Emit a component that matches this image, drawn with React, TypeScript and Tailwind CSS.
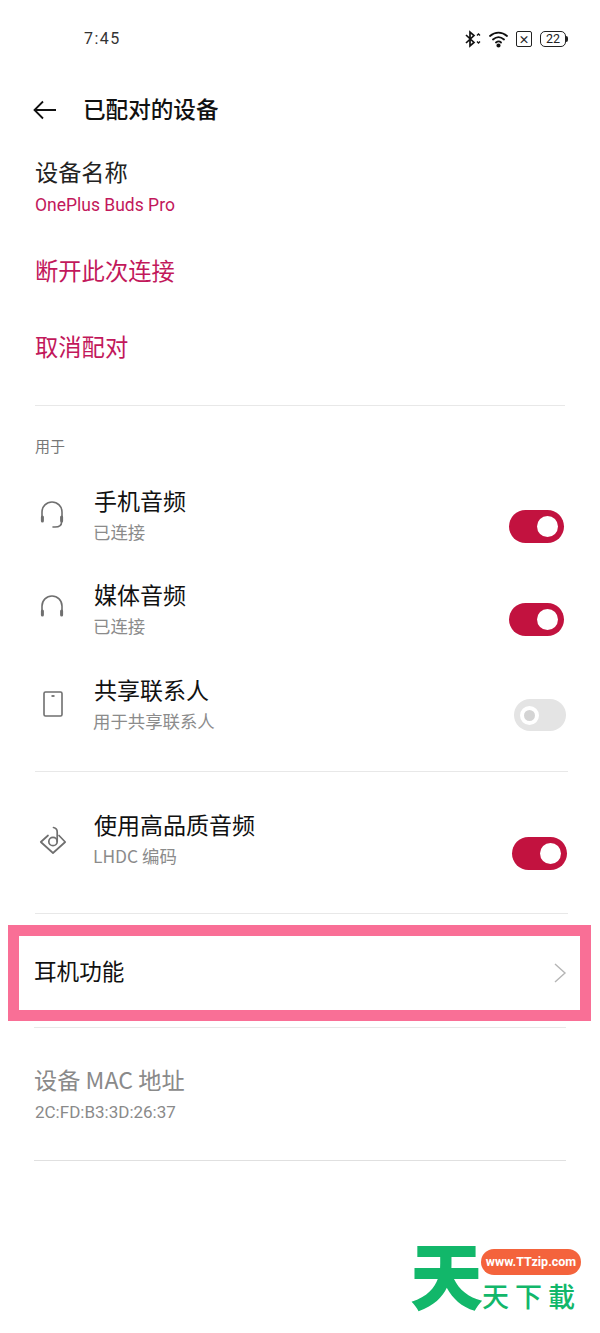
import type { ReactNode } from 'react'

const Toggle = ({ on = true, className = '' }: { on?: boolean; className?: string }) =>
  on ? (
    <div className={`flex h-[33px] w-[55px] items-center justify-end rounded-full bg-[#c2123f] pr-[6px] ${className}`}>
      <div className="h-[21px] w-[21px] rounded-full bg-white" />
    </div>
  ) : (
    <div className={`flex h-[32px] w-[52px] items-center rounded-full bg-[#e4e4e4] pl-[6px] ${className}`}>
      <div className="h-[19px] w-[19px] rounded-full border-[4px] border-white bg-[#d4d4d4]" />
    </div>
  )

const Headset = ({ mic = false }: { mic?: boolean }) => (
  <svg width="26" height="28" viewBox="0 0 26 28" fill="none" stroke="#6f6f6f" strokeWidth="1.600" strokeLinecap="round">
    <path d="M3 19V11a10 10 0 0 1 20 0v8" />
    <path d="M3.400 16v4M22.600 16v4" strokeWidth="3" />
    {mic && <path d="M22.600 21c0 3.600-3 5-6.600 5h-2" />}
  </svg>
)

const Phone = () => (
  <svg width="22" height="28" viewBox="0 0 22 28" fill="none" stroke="#6f6f6f" strokeWidth="1.600" strokeLinejoin="round" className="ml-[3px]">
    <rect x="2" y="2" width="18" height="24" rx="1.500" />
    <path d="M9.500 6h3" strokeWidth="1.800" />
  </svg>
)

const HiRes = () => (
  <svg width="28" height="30" viewBox="0 0 28 30" fill="none" stroke="#6f6f6f" strokeWidth="1.700" strokeLinejoin="round" strokeLinecap="round">
    <path d="M9 10.500 1.800 17 14 28l12.200-11L20 10.500" />
    <circle cx="14" cy="16.500" r="4.200" />
    <path d="M18.200 16.500V7c0-2.500-1.200-4-3.700-4.500" />
  </svg>
)

const Row = ({
  icon,
  title,
  sub,
  children,
  className = '',
}: {
  icon: ReactNode
  title: string
  sub: string
  children: ReactNode
  className?: string
}) => (
  <div className={`flex items-start ${className}`}>
    <div className="flex w-[59px] justify-start pl-[4px] pt-[16px]">{icon}</div>
    <div className="flex-1">
      <p className="text-[23px] leading-[30px] text-[#111]">{title}</p>
      <p className="ml-[-1px] mt-[2px] text-[17.400px] leading-[30px] text-[#8b8b8b]">{sub}</p>
    </div>
    {children}
  </div>
)

const StatusBar = () => (
  <div className="flex h-[78px] items-center justify-between pl-[84px] pr-[32px]">
    <span className="font-['Roboto',sans-serif] text-[16px] tracking-[1.500px] text-[#333]">7:45</span>
    <div className="flex items-center gap-[7px]">
      <svg width="18" height="18" viewBox="0 0 18 18" fill="none" stroke="#111" strokeWidth="1.700">
        <path d="M2 5l8 7.500-4 3.500V2l4 3.500L2 13" />
        <path d="M13 5.500l1.500-1.500L16 5.500M13 11.500l1.500 1.500 1.500-1.500" strokeWidth="1.300" />
      </svg>
      <svg width="20" height="18" viewBox="0 0 20 18" fill="none" stroke="#111" strokeWidth="1.800" strokeLinecap="round">
        <path d="M1 6c5-4.500 12-4.500 17 0M4 9.500c3.500-3 7.500-3 11 0M7 12.500c2-1.500 3.500-1.500 5 0" />
        <circle cx="9.500" cy="15.500" r="1.200" fill="#111" />
      </svg>
      <div className="flex h-[16px] w-[16px] items-center justify-center rounded-[2px] border-[1.500px] border-[#222] text-[11px] font-bold leading-none text-[#222]">
        ×
      </div>
      <div className="ml-[1px] flex items-center">
        <div className="flex h-[16px] w-[26px] items-center justify-center rounded-[5px] border-[1.500px] border-[#222] font-['Roboto',sans-serif] text-[12.500px] leading-none text-[#222]">
          22
        </div>
        <div className="h-[6px] w-[2px] rounded-r-sm bg-[#222]" />
      </div>
    </div>
  </div>
)

const Watermark = () => (
  <div className="absolute left-[412px] top-[1244px] h-[68px] w-[170px]">
    <span className="absolute left-[-2px] top-[-17px] text-[73px] font-black leading-[90px] text-[#12b76a]">天</span>
    <div className="absolute left-[69px] top-[5px] flex h-[26px] w-[100px] items-center justify-center rounded-full bg-[#f4633c] font-['Roboto',sans-serif] text-[12.500px] font-bold text-white">
      www.TTzip.com
    </div>
    <span className="absolute left-[70px] top-[35px] text-[27px] font-medium leading-[34px] tracking-[6px] text-[#12b76a]">
      天下載
    </span>
  </div>
)

export default function App() {
  return (
    <div className="relative h-[1333px] w-[600px] overflow-hidden bg-white font-['Noto_Sans_CJK_SC','Noto_Sans',sans-serif]">
      <StatusBar />

      <div className="flex h-[62px] items-center pl-[33px]">
        <svg width="24" height="20" viewBox="0 0 24 20" fill="none" stroke="#111" strokeWidth="1.800" className="mt-[2px]">
          <path d="M23 10H1.500M10 1.500 1.500 10l8.500 8.500" />
        </svg>
        <h1 className="ml-[26px] text-[22.600px] font-medium text-[#111]">已配对的设备</h1>
      </div>

      <div className="pl-[35px] pr-[35px]">
        <p className="mt-[16px] text-[23.200px] leading-[30px] text-[#222]">设备名称</p>
        <p className="mt-[4px] font-['Roboto',sans-serif] text-[17.500px] leading-[30px] text-[#c2185b]">OnePlus Buds Pro</p>
        <p className="mt-[34px] text-[23.300px] leading-[32px] text-[#c2185b]">断开此次连接</p>
        <p className="mt-[44px] text-[23.300px] leading-[32px] text-[#c2185b]">取消配对</p>

        <div className="mt-[43px] h-px w-[530px] bg-[#e8e8e8]" />

        <p className="mt-[29px] text-[15px] leading-[22px] text-[#777]">用于</p>

        <Row icon={<Headset mic />} title="手机音频" sub="已连接" className="mt-[28px] h-[94px]">
          <Toggle className="mr-[1px] mt-[25px]" />
        </Row>
        <Row icon={<Headset />} title="媒体音频" sub="已连接" className="h-[95px]">
          <Toggle className="mr-[1px] mt-[24px]" />
        </Row>
        <Row icon={<Phone />} title="共享联系人" sub="用于共享联系人" className="h-[97px]">
          <Toggle on={false} className="mr-[-1px] mt-[25px]" />
        </Row>

        <div className="h-px w-[533px] bg-[#e8e8e8]" />

        <Row icon={<HiRes />} title="使用高品质音频" sub="LHDC 编码" className="mt-[37px] h-[104px]">
          <Toggle className="mr-[-2px] mt-[28px]" />
        </Row>

        <div className="h-px w-[533px] bg-[#e8e8e8]" />
      </div>

      <div className="ml-[8px] mt-[11px] flex h-[96px] w-[583px] items-center justify-between border-[11px] border-[#f96f96] pb-[5px] pl-[15px] pr-[13px]">
        <span className="text-[22.600px] text-[#111]">耳机功能</span>
        <svg width="14" height="20" viewBox="0 0 14 20" fill="none" stroke="#b5b5b5" strokeWidth="1.400" className="mt-[5px]">
          <path d="M2 1l10 9-10 9" />
        </svg>
      </div>

      <div className="pl-[34px]">
        <div className="mt-[6px] h-px w-[532px] bg-[#e8e8e8]" />
        <p className="mt-[36px] text-[23.200px] leading-[30px] text-[#8a8a8a]">设备 MAC 地址</p>
        <p className="ml-[1px] mt-[3px] font-['Roboto',sans-serif] text-[17px] leading-[30px] text-[#8a8a8a]">2C:FD:B3:3D:26:37</p>
        <div className="mt-[33px] h-px w-[532px] bg-[#e0e0e0]" />
      </div>

      <Watermark />
    </div>
  )
}
